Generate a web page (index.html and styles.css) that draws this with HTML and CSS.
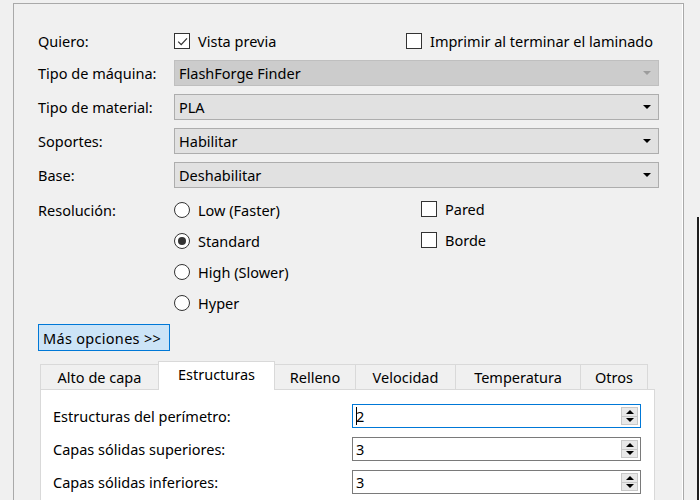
FILE: index.html
```html
<!DOCTYPE html>
<html lang="es">
<head>
<meta charset="utf-8">
<title>Opciones de laminado</title>
<link rel="stylesheet" href="styles.css">
</head>
<body>
<div class="window">
  <div class="group">
    <div class="row row-first">
      <span class="label">Quiero:</span>
      <div class="ctrl split">
        <label class="check"><span class="box"><svg width="13" height="13" viewBox="0 0 13 13"><path d="M2.2 6.6 L5.2 9.6 L11 3.4" fill="none" stroke="#333" stroke-width="1.3"/></svg></span>Vista previa</label>
        <label class="check check-right"><span class="box"></span>Imprimir al terminar el laminado</label>
      </div>
    </div>
    <div class="row">
      <span class="label">Tipo de máquina:</span>
      <div class="combo disabled">FlashForge Finder<span class="arrow"></span></div>
    </div>
    <div class="row">
      <span class="label">Tipo de material:</span>
      <div class="combo">PLA<span class="arrow"></span></div>
    </div>
    <div class="row">
      <span class="label">Soportes:</span>
      <div class="combo">Habilitar<span class="arrow"></span></div>
    </div>
    <div class="row">
      <span class="label">Base:</span>
      <div class="combo">Deshabilitar<span class="arrow"></span></div>
    </div>
    <div class="res">
      <span class="label res-label">Resolución:</span>
      <div class="radios">
        <label class="radio"><span class="circle"></span>Low (Faster)</label>
        <label class="radio"><span class="circle on"></span>Standard</label>
        <label class="radio"><span class="circle"></span>High (Slower)</label>
        <label class="radio"><span class="circle"></span>Hyper</label>
      </div>
      <div class="checks">
        <label class="check"><span class="box"></span>Pared</label>
        <label class="check"><span class="box"></span>Borde</label>
      </div>
    </div>
    <button class="more">Más opciones &gt;&gt;</button>
    <div class="tabs">
      <div class="tabbar">
        <span class="tab t1">Alto de capa</span>
        <span class="tab t2 active">Estructuras</span>
        <span class="tab t3">Relleno</span>
        <span class="tab t4">Velocidad</span>
        <span class="tab t5">Temperatura</span>
        <span class="tab t6">Otros</span>
      </div>
      <div class="panel">
        <div class="prow">
          <span class="plabel">Estructuras del perímetro:</span>
          <div class="spin focus"><span class="val"><span class="caret"></span>2</span><span class="btns"><span class="up"></span><span class="down"></span></span></div>
        </div>
        <div class="prow">
          <span class="plabel">Capas sólidas superiores:</span>
          <div class="spin"><span class="val">3</span><span class="btns"><span class="up"></span><span class="down"></span></span></div>
        </div>
        <div class="prow">
          <span class="plabel">Capas sólidas inferiores:</span>
          <div class="spin"><span class="val">3</span><span class="btns"><span class="up"></span><span class="down"></span></span></div>
        </div>
      </div>
    </div>
  </div>
  <div class="side"><div class="side-line"></div></div>
</div>
</body>
</html>
```

FILE: styles.css
```css
* { box-sizing: border-box; }
html, body {
  margin: 0;
  padding: 0;
  width: 700px;
  height: 500px;
  overflow: hidden;
  background: #f0f0f0;
  font-family: "Noto Sans", "Open Sans", sans-serif;
  font-size: 14.5px;
  color: #000;
}
.window {
  display: flex;
  height: 500px;
}
.group {
  margin: 3px 0 0 13px;
  width: 671px;
  height: 497px;
  flex-shrink: 0;
  overflow: hidden;
  border: 1px solid #a9a9a9;
  border-bottom: none;
  box-shadow: inset -1px 0 0 #fff;
  padding: 24px 24px 0 24px;
  display: flex;
  flex-direction: column;
}
.group > * { flex-shrink: 0; }
.row {
  display: grid;
  grid-template-columns: 136px 1fr;
  align-items: center;
  height: 26px;
  margin-bottom: 8px;
}
.row-first { margin-bottom: 6px; }
.label { line-height: 20px; }
.ctrl.split {
  display: flex;
  align-items: center;
}
.check {
  display: flex;
  align-items: center;
  gap: 8px;
  line-height: 20px;
}
.check-right { margin-left: auto; margin-right: 6px; }
.box {
  width: 16px;
  height: 16px;
  border: 1px solid #333;
  background: #fff;
  display: flex;
  align-items: center;
  justify-content: center;
}
.combo {
  position: relative;
  height: 26px;
  border: 1px solid #adadad;
  background: #e1e1e1;
  padding: 0 4px;
  line-height: 24px;
}
.combo.disabled {
  background: #cccccc;
  border-color: #bfbfbf;
}
.arrow {
  position: absolute;
  right: 7px;
  top: 10px;
  width: 0;
  height: 0;
  border-left: 4px solid transparent;
  border-right: 4px solid transparent;
  border-top: 4px solid #000;
}
.combo.disabled .arrow { border-top-color: #9c9c9c; }
.res {
  margin-top: -2px;
  display: grid;
  grid-template-columns: 136px 247px 1fr;
  grid-template-rows: repeat(4, 31px);
}
.res-label { grid-column: 1; grid-row: 1; align-self: center; }
.radios {
  grid-column: 2;
  grid-row: 1 / span 4;
  display: grid;
  grid-template-rows: repeat(4, 31px);
}
.checks {
  grid-column: 3;
  grid-row: 1 / span 2;
  display: grid;
  grid-template-rows: repeat(2, 31px);
}
.checks .check { margin-top: -2px; }
.radio {
  display: flex;
  align-items: center;
  gap: 8px;
  line-height: 20px;
}
.circle {
  width: 16px;
  height: 16px;
  border: 1px solid #333;
  border-radius: 50%;
  background: #fff;
  display: flex;
  align-items: center;
  justify-content: center;
}
.circle.on::after {
  content: "";
  width: 8px;
  height: 8px;
  border-radius: 50%;
  background: #333;
}
.more {
  margin-top: 6px;
  align-self: flex-start;
  width: 132px;
  height: 27px;
  border: 1px solid #0078d7;
  background: #cce4f7;
  font-family: inherit;
  font-size: 14.5px;
  letter-spacing: 0.3px;
  color: #000;
  padding: 0 0 0 4px;
  text-align: left;
}
.tabs {
  margin: 10px 0 0 2px;
  width: 615px;
  display: flex;
  flex-direction: column;
}
.tabbar {
  display: flex;
  align-items: flex-end;
  height: 28px;
}
.tab {
  height: 25px;
  border: 1px solid #d9d9d9;
  border-bottom: none;
  margin-right: -1px;
  background: #f0f0f0;
  text-align: center;
  line-height: 24px;
}
.tab.active {
  background: #fff;
  position: relative;
  z-index: 1;
  margin-bottom: -1px;
  height: 29px;
  line-height: 24px;
}
.t1 { width: 119px; }
.t2 { width: 117px; }
.t3 { width: 82px; }
.t4 { width: 101px; }
.t5 { width: 126px; }
.t6 { width: 68px; }
.panel {
  background: #fff;
  border: 1px solid #d9d9d9;
  border-bottom: none;
  padding: 14px 0 0 12px;
  height: 111px;
}
.prow {
  display: grid;
  grid-template-columns: 299px 289px;
  align-items: center;
  height: 24px;
  margin-bottom: 9px;
}
.prow:last-child { margin-bottom: 0; }
.spin {
  position: relative;
  height: 24px;
  border: 1px solid #7a7a7a;
  background: #fff;
  display: flex;
  align-items: center;
  padding-left: 3px;
}
.spin.focus { border-color: #0078d7; }
.val { position: relative; line-height: 20px; }
.caret {
  position: absolute;
  left: 0;
  top: 1px;
  width: 1px;
  height: 18px;
  background: #000;
}
.btns {
  position: absolute;
  right: 2px;
  top: 2px;
  bottom: 2px;
  width: 17px;
  display: flex;
  flex-direction: column;
  border: 1px solid #c8c8c8;
  background: #e8e8e8;
}
.up, .down {
  flex: 1;
  display: flex;
  align-items: center;
  justify-content: center;
}
.up { border-bottom: 1px solid #c8c8c8; }
.up::after {
  content: "";
  border-left: 4px solid transparent;
  border-right: 4px solid transparent;
  border-bottom: 4px solid #000;
}
.down::after {
  content: "";
  border-left: 4px solid transparent;
  border-right: 4px solid transparent;
  border-top: 4px solid #000;
}
.side {
  flex: 1;
  display: flex;
  flex-direction: column;
  align-items: flex-start;
}
.side-line {
  margin: 217px 0 0 13px;
  width: 2px;
  flex: 1;
  background: #1e1e1e;
  box-shadow: 1px 0 0 #fff;
}
```
